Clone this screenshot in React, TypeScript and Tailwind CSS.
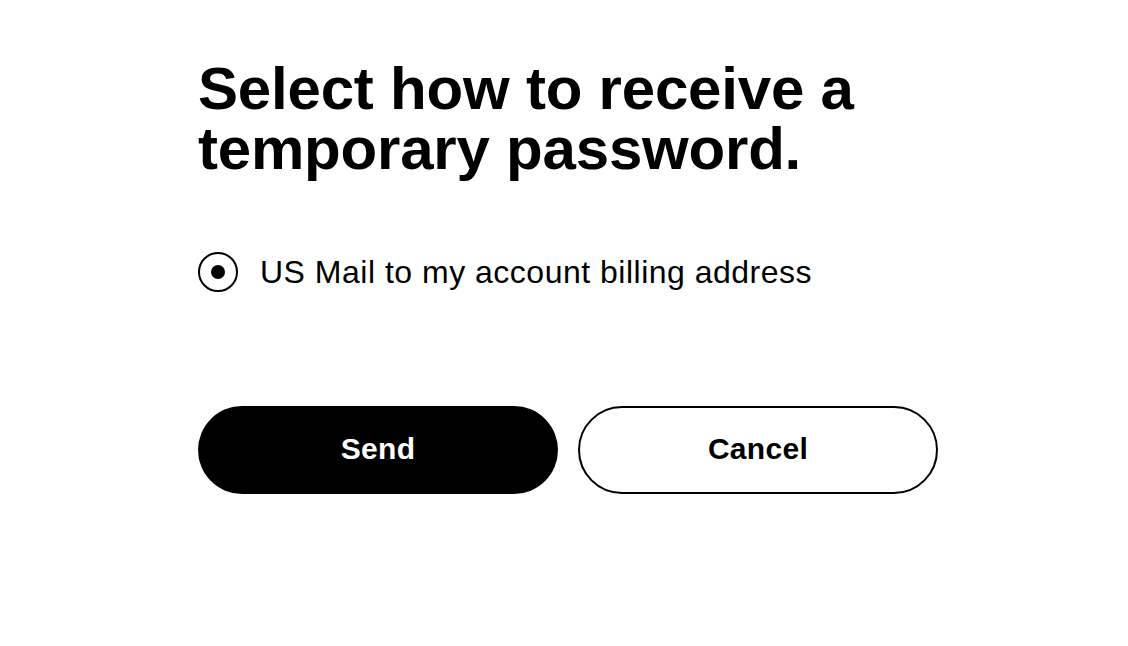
import React from "react";

export default function App() {
  return (
    <div className="min-h-[646px] w-full bg-white pl-[198px] pt-[59px] text-black" style={{ fontFamily: '"Liberation Sans", Arial, sans-serif' }}>
      <h1 className="text-[60px] font-bold leading-[60px] tracking-[-0.2px] w-[760px]">
        Select how to receive a<br />temporary password.
      </h1>
      <div className="mt-[73px] flex items-center gap-[22px]">
        <span className="flex h-[40px] w-[40px] items-center justify-center rounded-full border-2 border-black">
          <span className="h-[14px] w-[14px] rounded-full bg-black" />
        </span>
        <span className="text-[32px] leading-[36px] tracking-[0.5px]">US Mail to my account billing address</span>
      </div>
      <div className="mt-[114px] flex gap-[20px]">
        <button className="flex h-[88px] w-[360px] items-center justify-center rounded-full bg-black pb-[3px] text-[30px] font-bold tracking-[0.3px] text-white">
          Send
        </button>
        <button className="flex h-[88px] w-[360px] items-center justify-center rounded-full border-2 border-black bg-white pb-[3px] text-[30px] font-bold tracking-[0.3px] text-black">
          Cancel
        </button>
      </div>
    </div>
  );
}
